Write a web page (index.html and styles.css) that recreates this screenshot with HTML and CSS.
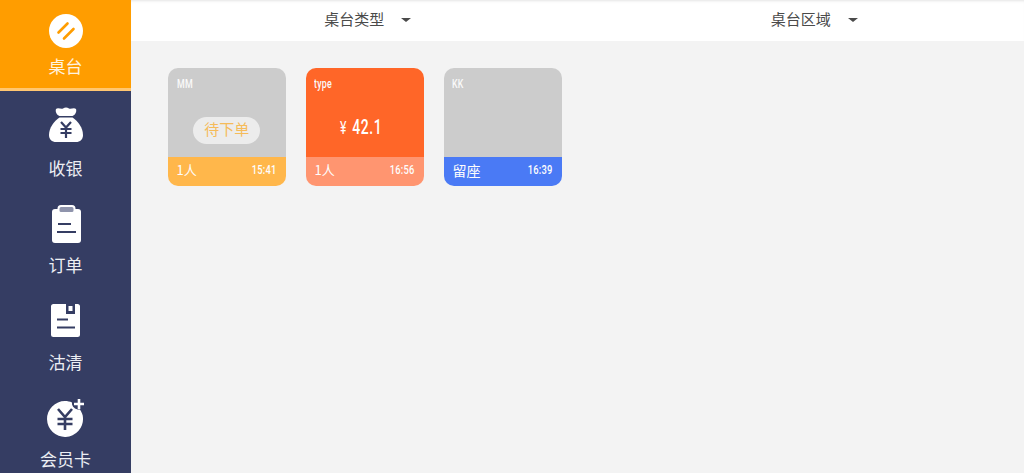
FILE: index.html
```html
<!DOCTYPE html>
<html lang="zh">
<head>
<meta charset="utf-8">
<title>桌台</title>
<link rel="stylesheet" href="styles.css">
</head>
<body>
<div class="app">
  <nav class="sidebar">
    <a class="nav-item active">
      <svg class="icon" width="36" height="36" viewBox="0 0 36 36"><circle cx="18" cy="18" r="17" fill="#fff"/><path d="M10.500 19.500 19.500 10.500M16 25.500 25.500 16" stroke="#ff9d00" stroke-width="2.600" stroke-linecap="round" fill="none"/></svg>
      <span class="nav-label">桌台</span>
    </a>
    <a class="nav-item">
      <svg class="icon" width="36" height="40" viewBox="0 0 36 40"><path d="M8 4c2-2 5 .5 7-.5 2-1.500 4-1.500 6 0 2 1 5-1.500 7 .5 1 3-1 6-3.500 7H11.500C9 10 7 7 8 4Z" fill="#fff"/><path d="M11.500 12.500h13C30 16 35 23 35 30c0 4.500-3 7-7 7H8c-4 0-7-2.500-7-7 0-7 5-14 10.500-17.500Z" fill="#fff"/><path d="M13 17l5 5.500 5-5.500M18 22.500V33M12.500 24h11M12.500 28h11" stroke="#353d63" stroke-width="2.200" fill="none"/></svg>
      <span class="nav-label">收银</span>
    </a>
    <a class="nav-item">
      <svg class="icon icon-order" width="29" height="38" viewBox="0 0 29 38"><path d="M3 4h23a3 3 0 0 1 3 3v28a3 3 0 0 1-3 3H3a3 3 0 0 1-3-3V7a3 3 0 0 1 3-3Z" fill="#fff"/><rect x="6.500" y="1" width="16" height="7" rx="2.500" fill="#8f94ac" stroke="#fff" stroke-width="2"/><path d="M6 19h13M5 27h19" stroke="#353d63" stroke-width="2" fill="none"/></svg>
      <span class="nav-label">订单</span>
    </a>
    <a class="nav-item">
      <svg class="icon icon-clear" width="29" height="33" viewBox="0 0 29 33"><path d="M2.500 0h24A2.500 2.500 0 0 1 29 2.500v28a2.500 2.500 0 0 1-2.500 2.500h-24A2.500 2.500 0 0 1 0 30.500v-28A2.500 2.500 0 0 1 2.500 0Z" fill="#fff"/><path d="M15 0h9v10h-9Z" fill="#353d63"/><path d="M17.500 2h4v5h-4Z" fill="#fff"/><path d="M6 15.500h11M6 23.500h18" stroke="#353d63" stroke-width="2" fill="none"/></svg>
      <span class="nav-label">沽清</span>
    </a>
    <a class="nav-item">
      <svg class="icon icon-card" width="40" height="38" viewBox="0 0 40 38"><path d="M19 2c2.500 0 5 .5 7 1.500-.5 3.500 3 7.500 8 7 1.500 2.500 3 5 3 8.500a18 18 0 1 1-18-17Z" fill="#fff"/><path d="M12 10l7 8 7-8M19 18v13M11.500 20h15M11.500 25h15" stroke="#353d63" stroke-width="2.600" fill="none"/><path d="M33 0v10M28 5h10" stroke="#fff" stroke-width="2.600" fill="none"/></svg>
      <span class="nav-label">会员卡</span>
    </a>
  </nav>
  <div class="content">
    <header class="filters">
      <div class="filter"><span class="filter-name">桌台类型</span><i class="caret"></i></div>
      <div class="filter"><span class="filter-name">桌台区域</span><i class="caret"></i></div>
    </header>
    <main class="tables">
      <article class="table-card">
        <div class="card-body idle">
          <div class="card-name">MM</div>
          <div class="card-center"><span class="pill">待下单</span></div>
        </div>
        <div class="card-foot foot-yellow"><span class="foot-left">1人</span><span class="foot-time">15:41</span></div>
      </article>
      <article class="table-card">
        <div class="card-body busy">
          <div class="card-name">type</div>
          <div class="card-center"><span class="amount"><small class="yen">¥</small>42.1</span></div>
        </div>
        <div class="card-foot foot-salmon"><span class="foot-left">1人</span><span class="foot-time">16:56</span></div>
      </article>
      <article class="table-card">
        <div class="card-body idle">
          <div class="card-name">KK</div>
          <div class="card-center"></div>
        </div>
        <div class="card-foot foot-blue"><span class="foot-left reserved">留座</span><span class="foot-time">16:39</span></div>
      </article>
    </main>
  </div>
</div>
</body>
</html>
```
FILE: styles.css
```css
* { box-sizing: border-box; }
html, body { margin: 0; height: 100%; overflow: hidden; }
body { font-family: "Noto Sans CJK SC", "Noto Sans", sans-serif; background: #f3f3f3; }
.app { display: flex; height: 473px; overflow: hidden; }

.sidebar { width: 131px; flex: none; background: #353d63; display: flex; flex-direction: column; overflow: hidden; }
.nav-item { flex: none; height: 97px; display: flex; flex-direction: column; align-items: center; color: #eceef3; font-size: 17px; line-height: 24px; }
.nav-item .icon { display: block; flex: none; }
.nav-item:nth-child(2) { padding-top: 14px; }
.nav-item:nth-child(2) .nav-label { margin-top: 11px; }
.nav-item:nth-child(3) { padding-top: 17px; }
.nav-item:nth-child(3) .nav-label { margin-top: 10px; }
.nav-item:nth-child(4) { padding-top: 19px; }
.nav-item:nth-child(4) .nav-label { margin-top: 13px; }
.nav-item:nth-child(5) { padding-top: 17px; }
.nav-item:nth-child(5) .nav-label { margin-top: 10px; }
.icon-order { margin-left: 2px; }
.icon-clear { margin-left: -1px; }
.icon-card { margin-left: 1px; }
.nav-item.active { height: 91px; background: #ff9d00; border-bottom: 3px solid #ffc671; padding-top: 13px; color: #fff3e0; }
.nav-item.active .nav-label { margin-top: 5px; }

.content { flex: 1; display: flex; flex-direction: column; min-width: 0; }
.filters { height: 41px; flex: none; background: #fff; display: grid; grid-template-columns: 1fr 1fr; box-shadow: inset 0 3px 3px -2px #e4e4e4; }
.filter { display: flex; align-items: center; justify-content: center; padding-left: 27px; padding-bottom: 5px; color: #4a4a4a; font-size: 15px; }
.caret { width: 0; height: 0; margin-left: 17px; margin-top: 4px; border-left: 5px solid transparent; border-right: 5px solid transparent; border-top: 4px solid #4a4a4a; }

.tables { display: flex; gap: 20.3px; padding: 27px 37px; align-items: flex-start; }
.table-card { width: 117.700px; height: 118px; flex: none; border-radius: 10px; overflow: hidden; display: flex; flex-direction: column; color: #fff; }
.card-body { flex: 1; display: flex; flex-direction: column; padding: 8px 8.500px 0; }
.idle { background: #cccccc; }
.busy { background: #ff6628; }
.card-name { font-family: "Roboto", sans-serif; font-weight: 500; font-size: 13px; line-height: 16px; letter-spacing: .4px; color: #fafafa; transform: scaleX(.68); transform-origin: left center; }
.card-center { flex: 1; display: flex; align-items: center; justify-content: center; }
.pill { width: 67px; height: 27px; margin-top: 11px; border-radius: 14px; background: #ececec; color: #f5bb5a; font-size: 15px; line-height: 24px; text-align: center; }
.amount { font-family: "Roboto", sans-serif; font-weight: 500; font-size: 20.500px; line-height: 24px; letter-spacing: .8px; margin: 5px 8px 0 0; transform: scaleX(.68); white-space: nowrap; }
.yen { font-size: 18px; font-weight: 400; margin-right: 8px; }
.card-foot { height: 29px; flex: none; display: flex; align-items: center; justify-content: space-between; padding: 0 9px 3px 8.500px; }
.foot-yellow { background: #ffb74b; }
.foot-salmon { background: #ff9570; }
.foot-blue { background: #4a7af5; }
.foot-left { font-size: 13px; line-height: 18px; color: #fdfdfd; }
.reserved { font-size: 14px; }
.foot-time { font-family: "Roboto", sans-serif; font-weight: 500; font-size: 13px; line-height: 18px; letter-spacing: .3px; color: #fdfdfd; transform: scaleX(.72); transform-origin: right center; }
```
